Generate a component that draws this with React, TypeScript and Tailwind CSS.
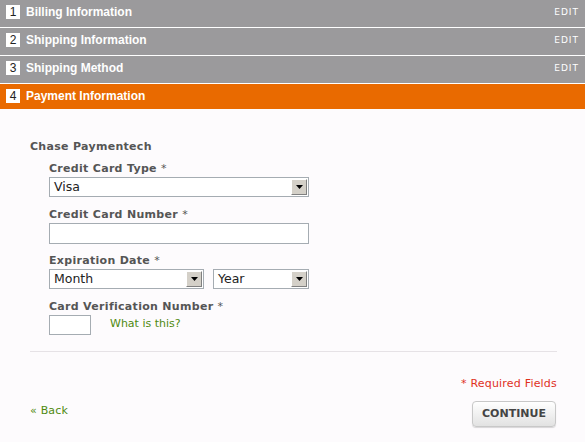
const verdana = "font-['DejaVu_Sans',Verdana,sans-serif]";
const arial = "font-['Liberation_Sans',Arial,sans-serif]";

const steps = [
  { n: 1, title: "Billing Information", done: true },
  { n: 2, title: "Shipping Information", done: true },
  { n: 3, title: "Shipping Method", done: true },
  { n: 4, title: "Payment Information", done: false },
];

function StepBar({ n, title, done }: { n: number; title: string; done: boolean }) {
  return (
    <div
      className={`flex items-start pt-[5px] pl-[6px] pr-[6px] ${
        done ? "h-[28px] border-b border-white bg-[#9b9a9c]" : "h-[25px] bg-[#e96a00]"
      }`}
    >
      <span className={`${arial} flex items-center justify-center w-[14px] h-[14px] bg-white text-[#222] text-[12px] leading-none`}>
        {n}
      </span>
      <span className={`${arial} ml-[6px] text-white font-bold text-[12px] leading-[14px]`}>{title}</span>
      {done && (
        <span className={`${verdana} ml-auto mt-[3px] text-white text-[9px] tracking-[1px] leading-none`}>EDIT</span>
      )}
    </div>
  );
}

function Arrow() {
  return (
    <span className="flex items-center justify-center w-[16px] h-[16px] bg-[#d4d0c8] border border-t-white border-l-white border-r-[#808080] border-b-[#808080]">
      <svg width="7" height="4" viewBox="0 0 7 4">
        <path d="M0 0h7L3.5 4z" fill="#000" />
      </svg>
    </span>
  );
}

function Select({ value, width }: { value: string; width: string }) {
  return (
    <div className={`${width} h-[20px] flex items-center justify-between bg-white border border-[#a5acb2] pl-[4px] pr-[1px]`}>
      <span className={`${verdana} text-[12.5px] text-[#222] leading-none`}>{value}</span>
      <Arrow />
    </div>
  );
}

function Label({ children }: { children: React.ReactNode }) {
  return (
    <div className={`${verdana} font-bold text-[11px] text-[#555] tracking-[0.3px] leading-[13px] mb-[2px]`}>
      {children} <span className="font-normal">*</span>
    </div>
  );
}

export default function App() {
  return (
    <div className="w-[585px] h-[442px] bg-[#fdfbfd] overflow-hidden">
      {steps.map((s) => (
        <StepBar key={s.n} {...s} />
      ))}

      <div className="pl-[30px] pr-[28px] pt-[31px]">
        <div className={`${verdana} font-bold text-[11px] text-[#555] tracking-[0.3px] leading-[13px]`}>Chase Paymentech</div>

        <div className="pl-[19px] pt-[9px]">
          <Label>Credit Card Type</Label>
          <Select value="Visa" width="w-[260px]" />

          <div className="mt-[11px]">
            <Label>Credit Card Number</Label>
            <div className="w-[260px] h-[21px] bg-white border border-[#a5acb2]" />
          </div>

          <div className="mt-[10px]">
            <Label>Expiration Date</Label>
            <div className="flex gap-[9px]">
              <Select value="Month" width="w-[155px]" />
              <Select value="Year" width="w-[96px]" />
            </div>
          </div>

          <div className="mt-[11px]">
            <Label>Card Verification Number</Label>
            <div className="flex items-center">
              <div className="w-[42px] h-[20px] bg-white border border-[#a5acb2]" />
              <a className={`${verdana} ml-[19px] -mt-[4px] text-[11px] text-[#4f8a10] leading-none`}>What is this?</a>
            </div>
          </div>
        </div>

        <div className="mt-[16px] border-t border-[#e6e2e6]" />

        <div className={`${verdana} mt-[25px] text-right text-[11px] text-[#e0301e] tracking-[0.2px] leading-[13px]`}>* Required Fields</div>

        <div className="flex items-start justify-between mt-[11px]">
          <a className={`${verdana} mt-[4px] text-[11px] text-[#4f8a10] tracking-[0.2px] leading-none`}>« Back</a>
          <button className={`${verdana} w-[84px] h-[26px] mr-[1px] rounded-[4px] border border-[#c8c8c8] bg-gradient-to-b from-white to-[#e2e2e2] shadow-[0_1px_1px_rgba(0,0,0,0.15)] text-[11px] font-bold text-[#444]`}>
            CONTINUE
          </button>
        </div>
      </div>
    </div>
  );
}
